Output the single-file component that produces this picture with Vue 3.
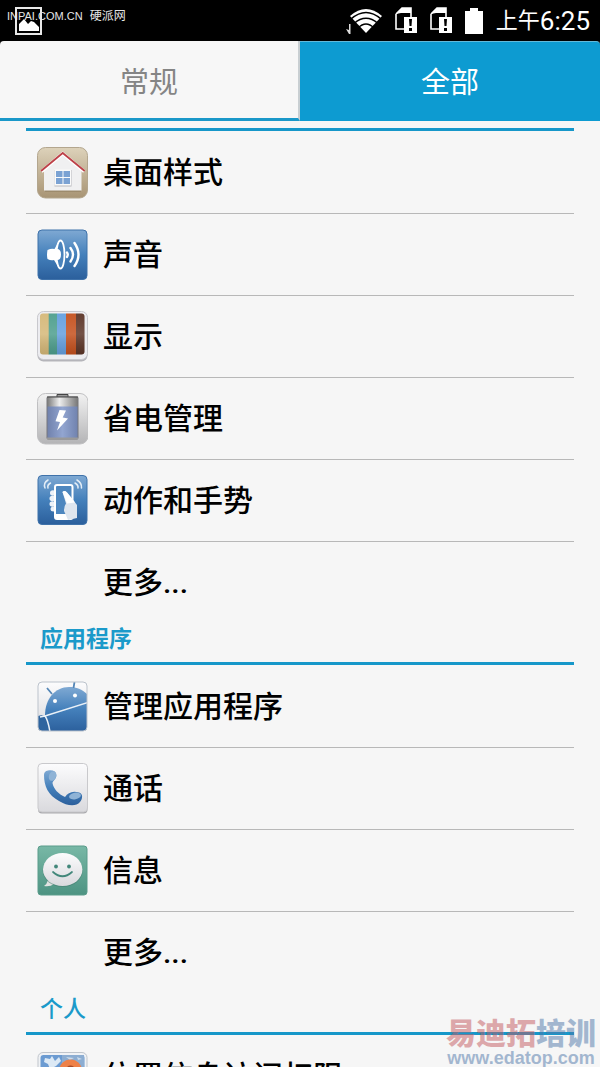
<script setup>
import { ref } from 'vue'

const tab = ref('all')
const tabs = [
  { id: 'general', label: '常规' },
  { id: 'all', label: '全部' },
]
const sections = [
  {
    title: '',
    rows: [
      { icon: 'home', label: '桌面样式' },
      { icon: 'sound', label: '声音' },
      { icon: 'display', label: '显示' },
      { icon: 'battery', label: '省电管理' },
      { icon: 'gesture', label: '动作和手势' },
      { icon: '', label: '更多...' },
    ],
  },
  {
    title: '应用程序',
    strong: true,
    rows: [
      { icon: 'apps', label: '管理应用程序' },
      { icon: 'call', label: '通话' },
      { icon: 'message', label: '信息' },
      { icon: '', label: '更多...' },
    ],
  },
  { title: '个人', rows: [{ icon: 'location', label: '位置信息访问权限' }] },
]
</script>

<template>
  <div class="screen">
    <header class="status">
      <svg class="shot" width="28" height="28" viewBox="0 0 28 28">
        <rect x="1" y="1" width="25" height="26" fill="none" stroke="#e8e8e8" stroke-width="2" />
        <path d="M4 24V17l5-5 4 5 3-3 3 1 5 5v4z" fill="#fff" />
      </svg>
      <div class="signals">
        <svg width="36" height="26" viewBox="0 0 36 26">
          <path d="M0 21l3 1v-6h1.500v10H3z" fill="#ddd" />
          <path d="M4 8Q20-6 36 8L20 25z" fill="#fff" />
          <g fill="none" stroke="#000" stroke-width="1.600">
            <path d="M5 11Q20-2 35 11" />
            <path d="M8 15.500Q20 5 32 15.500" />
            <path d="M12 20Q20 12 28 20" />
          </g>
        </svg>
        <svg v-for="n in 2" :key="n" width="22" height="27" viewBox="0 0 22 27">
          <path d="M1 7l6-6h9v9M1 7v15h8" fill="none" stroke="#fff" stroke-width="1.600" />
          <path d="M1 7l6-6h9v5H6z" fill="#fff" />
          <rect x="9" y="10" width="13" height="16" fill="#fff" />
          <path d="M14 12h3l-.5 7h-2zM14 21h3v3h-3z" fill="#000" />
        </svg>
        <svg width="18" height="26" viewBox="0 0 18 26">
          <path d="M5 0h8v3h5v23H0V3h5z" fill="#fff" />
        </svg>
        <time class="clock"><span class="period">上午</span>6:25</time>
      </div>
      <span class="source">INPAI.COM.CN <span>硬派网</span></span>
    </header>

    <nav class="tabs">
      <button
        v-for="t in tabs"
        :key="t.id"
        type="button"
        class="tab"
        :class="{ active: tab === t.id }"
        @click="tab = t.id"
      >{{ t.label }}</button>
    </nav>

    <main class="list">
      <section v-for="(s, i) in sections" :key="i">
        <h2 class="title" :class="{ blank: !s.title, strong: s.strong }">{{ s.title }}</h2>
        <ul class="rows">
          <li v-for="r in s.rows" :key="r.label" class="item">
            <button type="button" class="row">
              <svg class="icon" width="52" height="52" viewBox="0 0 52 52" aria-hidden="true">
                <defs>
                  <linearGradient id="blue" x2="0" y2="1">
                    <stop stop-color="#7fa9d3" /><stop offset=".5" stop-color="#4480bb" /><stop offset="1" stop-color="#2b5f9c" />
                  </linearGradient>
                  <linearGradient id="sand" x2="0" y2="1">
                    <stop stop-color="#ddd2ba" /><stop offset="1" stop-color="#a89474" />
                  </linearGradient>
                  <linearGradient id="silver" x2="0" y2="1">
                    <stop stop-color="#fcfcfd" /><stop offset="1" stop-color="#d9d9dd" />
                  </linearGradient>
                  <linearGradient id="steel" x2="0" y2="1">
                    <stop stop-color="#f2f2f2" /><stop offset="1" stop-color="#b4b4b6" />
                  </linearGradient>
                  <linearGradient id="green" x2="0" y2="1">
                    <stop stop-color="#78b8a6" /><stop offset="1" stop-color="#4d9382" />
                  </linearGradient>
                  <linearGradient id="cell">
                    <stop stop-color="#6f80ab" /><stop offset=".5" stop-color="#92a5d0" /><stop offset="1" stop-color="#7082ae" />
                  </linearGradient>
                  <linearGradient id="cap">
                    <stop stop-color="#777" /><stop offset=".4" stop-color="#eee" /><stop offset="1" stop-color="#777" />
                  </linearGradient>
                  <linearGradient id="shade" x2="0" y2="1">
                    <stop stop-color="#fff" stop-opacity=".05" /><stop offset=".5" stop-color="#fff" stop-opacity=".15" /><stop offset="1" stop-color="#000" stop-opacity=".1" />
                  </linearGradient>
                  <clipPath id="tile"><rect x="2" y="1" width="49" height="49" rx="4" /></clipPath>
                </defs>

                <template v-if="r.icon === 'home'">
                  <rect x="1.500" y=".5" width="50" height="50.500" rx="8" fill="url(#sand)" stroke="#b3a68e" />
                  <path d="M9 23L26.700 8 45 23v21H9z" fill="#8b7a5c" opacity=".5" transform="translate(0 1)" />
                  <path d="M8 23L26.700 7 45.500 23v20.500H8z" fill="#f0f0f1" />
                  <path d="M5.500 24.500L26.700 6.500l21.500 18" fill="none" stroke="#fff" stroke-width="3.500" />
                  <path d="M5 24L26.700 6l22 18" fill="none" stroke="#bd4148" stroke-width="1.800" />
                  <rect x="18.500" y="23" width="17" height="16.500" fill="#b8b8bd" />
                  <rect x="18.500" y="22.500" width="16.500" height="16" fill="#fafafa" />
                  <path d="M20 24h6.500v6H20zM27.500 24H34v6h-6.500zM20 31h6.500v6H20zM27.500 31H34v6h-6.500z" fill="#7ba2d3" />
                </template>

                <template v-else-if="r.icon === 'sound'">
                  <rect x="2" y="1" width="49" height="49.500" rx="4" fill="url(#blue)" stroke="#3f72aa" />
                  <path d="M11.500 21q4-2 7-1l4.500-8v27l-5-8q-3 1-6.500-1-1-4 0-9z" fill="#fff" />
                  <ellipse cx="24.500" cy="25.500" rx="4" ry="14" fill="#4a83bc" stroke="#fff" stroke-width="1.800" />
                  <path d="M21 20q4 0 4 5.500t-4 5.500z" fill="#fff" />
                  <g fill="none" stroke="#fff" stroke-width="2.400" stroke-linecap="round">
                    <path d="M31 23.500q1.500 2 0 4.500" /><path d="M34.500 19q5 6.500 0 13.500" /><path d="M38.500 14q8 11.500 0 23" />
                  </g>
                </template>

                <template v-else-if="r.icon === 'display'">
                  <rect x="1.500" y="1.500" width="50" height="49" rx="6" fill="#b5b5ba" />
                  <rect x="1.500" y=".5" width="50" height="48" rx="6" fill="#ececf0" stroke="#c8c8cd" />
                  <clipPath id="panel"><rect x="4" y="2.500" width="44.500" height="41" rx="3" /></clipPath>
                  <g clip-path="url(#panel)">
                    <path fill="#d5b878" d="M4 2h9v42H4z" /><path fill="#4d9e8d" d="M12.700 2H21v42h-8.300z" />
                    <path fill="#649fdf" d="M21 2h9v42h-9z" /><path fill="#c4501d" d="M30 2h10v42H30z" />
                    <path fill="#5b3427" d="M40 2h9v42h-9z" /><path fill="url(#shade)" d="M4 2h45v42H4z" />
                  </g>
                </template>

                <template v-else-if="r.icon === 'battery'">
                  <rect x="1.500" y=".5" width="50.500" height="50.500" rx="8" fill="url(#steel)" stroke="#c0c0c2" />
                  <path d="M21 4V1.500h11V4" fill="#999" stroke="#444" />
                  <rect x="11" y="4" width="31" height="42" rx="1" fill="url(#cell)" stroke="#77777d" />
                  <path d="M11 4h31v9.500H11z" fill="url(#cap)" />
                  <path d="M11 4h31" stroke="#444" />
                  <path d="M11 45.500h31" stroke="#999" stroke-width="2" />
                  <path d="M23.500 17l6.500.500-3.300 7 5.300 1L21 37.500l3-8.500-4.500-.700z" fill="#fff" />
                </template>

                <template v-else-if="r.icon === 'gesture'">
                  <rect x="2" y=".5" width="49" height="49" rx="4" fill="url(#blue)" stroke="#3f72aa" />
                  <g fill="#edf2f8">
                    <ellipse cx="17" cy="18" rx="3" ry="2.700" /><ellipse cx="16.500" cy="23.500" rx="3" ry="2.700" />
                    <ellipse cx="16.500" cy="29" rx="3" ry="2.700" /><ellipse cx="17.500" cy="34" rx="3" ry="2.500" />
                  </g>
                  <rect x="19" y="10" width="17.500" height="34" rx="2" fill="#4e87bf" stroke="#fff" stroke-width="2" />
                  <path d="M19 39h17v5H19z" fill="#fff" />
                  <path d="M26.500 17q2-2 4.500.500l5 6 5 6.500v13l-9 2q-2-5-4-9 0-5 2-7.500z" fill="#dfe6ef" />
                  <path d="M26.500 17q2-2 4.500.500l5 6 3 4-8 1z" fill="#fff" />
                  <g fill="none" stroke="#e4edf6" stroke-width="1.500" stroke-linecap="round">
                    <path d="M12 5q-5 3-3 8M14.500 8q-3.500 2-2.500 5" /><path d="M41 5q5 3 4.500 8M39 8q3.500 2 3 5" />
                  </g>
                </template>

                <template v-else-if="r.icon === 'apps'">
                  <rect x="2" y="1" width="49" height="49" rx="4" fill="url(#silver)" />
                  <g clip-path="url(#tile)">
                    <path d="M9 34.500C9 18 19 6 33 6c8 0 14 3 19 8v37H13z" fill="url(#blue)" />
                    <path d="M2 35q6-2 8 2t4 14H2z" fill="#2e649f" />
                    <path d="M11 7l5 6M38.500 1l-1 6" stroke="#5587b7" stroke-width="1.800" />
                    <path d="M4 36l5-1 43-13.500M9 35q3 4 5 16" fill="none" stroke="#e9f0f7" stroke-width="1.500" />
                    <circle cx="19" cy="20" r="2" fill="#fff" /><circle cx="39" cy="14.500" r="2" fill="#fff" />
                  </g>
                  <rect x="2" y="1" width="49" height="49" rx="4" fill="none" stroke="#bcc3cc" />
                </template>

                <template v-else-if="r.icon === 'call'">
                  <rect x="2" y="1.500" width="49.500" height="49" rx="4" fill="#a9a9ad" />
                  <rect x="2" y=".5" width="49.500" height="48.500" rx="4" fill="url(#silver)" stroke="#c9c9cc" />
                  <path d="M8 12q0-4 4-4.500c5-1 8 1 8.500 4.500 0 4-3.500 5.500-4 8 1 6 6 11 12.500 14 3-4 7-6.500 14-4.500 4 1 4 6 1 9.500-4 5-13 4-21-1C12 32 8 23 8 12z" fill="url(#blue)" />
                  <ellipse cx="16.500" cy="13" rx="3.500" ry="5" fill="#8fb3d6" transform="rotate(20 16.500 13)" />
                  <ellipse cx="39" cy="33" rx="6" ry="3.300" fill="#8fb3d6" transform="rotate(-10 39 33)" />
                </template>

                <template v-else-if="r.icon === 'message'">
                  <rect x="2" y="1" width="49" height="49" rx="3" fill="url(#green)" stroke="#5a9c8b" />
                  <path d="M12 35q-1 4-4 6 6 1 10-2z" fill="#e2e3e2" />
                  <ellipse cx="26.700" cy="25.500" rx="20" ry="16.500" fill="#417a6c" opacity=".5" />
                  <ellipse cx="26.700" cy="24.500" rx="19.700" ry="16.500" fill="url(#silver)" />
                  <circle cx="20" cy="21.500" r="1.900" fill="#42877a" /><circle cx="33" cy="21.500" r="1.900" fill="#42877a" />
                  <path d="M17 27q9.500 8.500 19 0" fill="none" stroke="#42877a" stroke-width="1.700" stroke-linecap="round" />
                </template>

                <template v-else-if="r.icon === 'location'">
                  <rect x="2" y="1.500" width="49" height="49" rx="5" fill="#f0f2f5" stroke="#c0c5cc" />
                  <rect x="4.500" y="4" width="44" height="44" rx="3" fill="#6b9bd2" />
                  <path d="M26 4h22v12H26z" fill="#8cadd2" />
                  <path d="M9 7l5 1 2-3 3 5 4-4 2 4-5 5-6 3-2-5-4-2z" fill="#dce9f5" />
                  <path d="M30 6l8 1-4 2zM41 6l5 2-4 1z" fill="#cbdcec" />
                  <circle cx="34.500" cy="20" r="11.500" fill="#ee8148" />
                  <circle cx="34.500" cy="19" r="4.500" fill="#a84a27" />
                </template>
              </svg>
              <span class="label">{{ r.label }}</span>
            </button>
          </li>
        </ul>
      </section>
    </main>

    <aside class="mark">
      <strong><span>易迪拓</span>培训</strong>
      <a href="#">www.edatop.com</a>
    </aside>
  </div>
</template>

<style>
body { background: #f6f6f6; }
</style>

<style scoped>
.screen {
  position: relative;
  display: flex;
  flex-direction: column;
  height: 100vh;
  overflow: hidden;
  background: #f6f6f6;
  font-family: Roboto, "Noto Sans CJK SC", sans-serif;
  color: #000;
}
.status {
  position: relative;
  flex: none;
  display: flex;
  align-items: center;
  justify-content: space-between;
  height: 41px;
  padding: 0 10px 0 15px;
  background: #000;
  color: #fff;
}
.signals { display: flex; align-items: center; gap: 13px; }
.clock { display: flex; align-items: center; font-size: 26px; line-height: 38px; }
.period { font-size: 22px; }
.source {
  position: absolute;
  left: 7px;
  top: 8px;
  font: 11px/16px "Liberation Sans", "Noto Sans CJK SC", sans-serif;
  color: #e6e6e6;
}
.source span { margin-left: 4px; font-size: 12px; }
.tabs { flex: none; display: flex; background: #111; }
.tab {
  width: 50%;
  height: 80px;
  padding: 0;
  border: 0;
  border-right: 2px solid #c9cfd2;
  border-bottom: 3px solid #1a98c9;
  border-radius: 4px 0 0 0;
  background: #f7f7f7;
  color: #858585;
  font: inherit;
  font-size: 29px;
}
.tab.active {
  border-color: #0d9bd1;
  border-top: 1px solid #62b9da;
  border-right: 0;
  border-radius: 0 4px 0 0;
  background: #0d9bd1;
  color: #fff;
}
.list { flex: 1; min-height: 0; padding: 7px 26px 0; overflow: hidden; }
.title {
  margin: 0;
  padding: 0 0 6px 14px;
  border-bottom: 3px solid #1697c9;
  color: #1b9aca;
  font-size: 23px;
  line-height: 32px;
  font-weight: 500;
}
.title.strong { font-weight: 700; }
.title.blank { padding: 0; }
.rows { list-style: none; margin: 0; padding: 1px 0 0; }
.item { border-bottom: 1px solid #b8b8b8; }
.item:last-child { border-color: transparent; }
.row {
  display: flex;
  align-items: center;
  gap: 15px;
  width: 100%;
  height: 81px;
  padding: 0 10px;
  border: 0;
  background: none;
  color: #000;
  font: inherit;
  font-size: 30px;
  font-weight: 500;
  text-align: left;
}
.label { padding-bottom: 5px; }
.icon { flex: none; }
.mark {
  position: absolute;
  right: 4px;
  bottom: 0;
  display: flex;
  flex-direction: column;
  align-items: center;
  opacity: .5;
}
.mark strong {
  font: 900 30px/36px "Noto Sans CJK SC", sans-serif;
  color: #5078aa;
}
.mark strong span { color: #c35a60; }
.mark a {
  font: bold 18px/18px "Liberation Sans", sans-serif;
  color: #5078aa;
  text-decoration: none;
}
</style>
